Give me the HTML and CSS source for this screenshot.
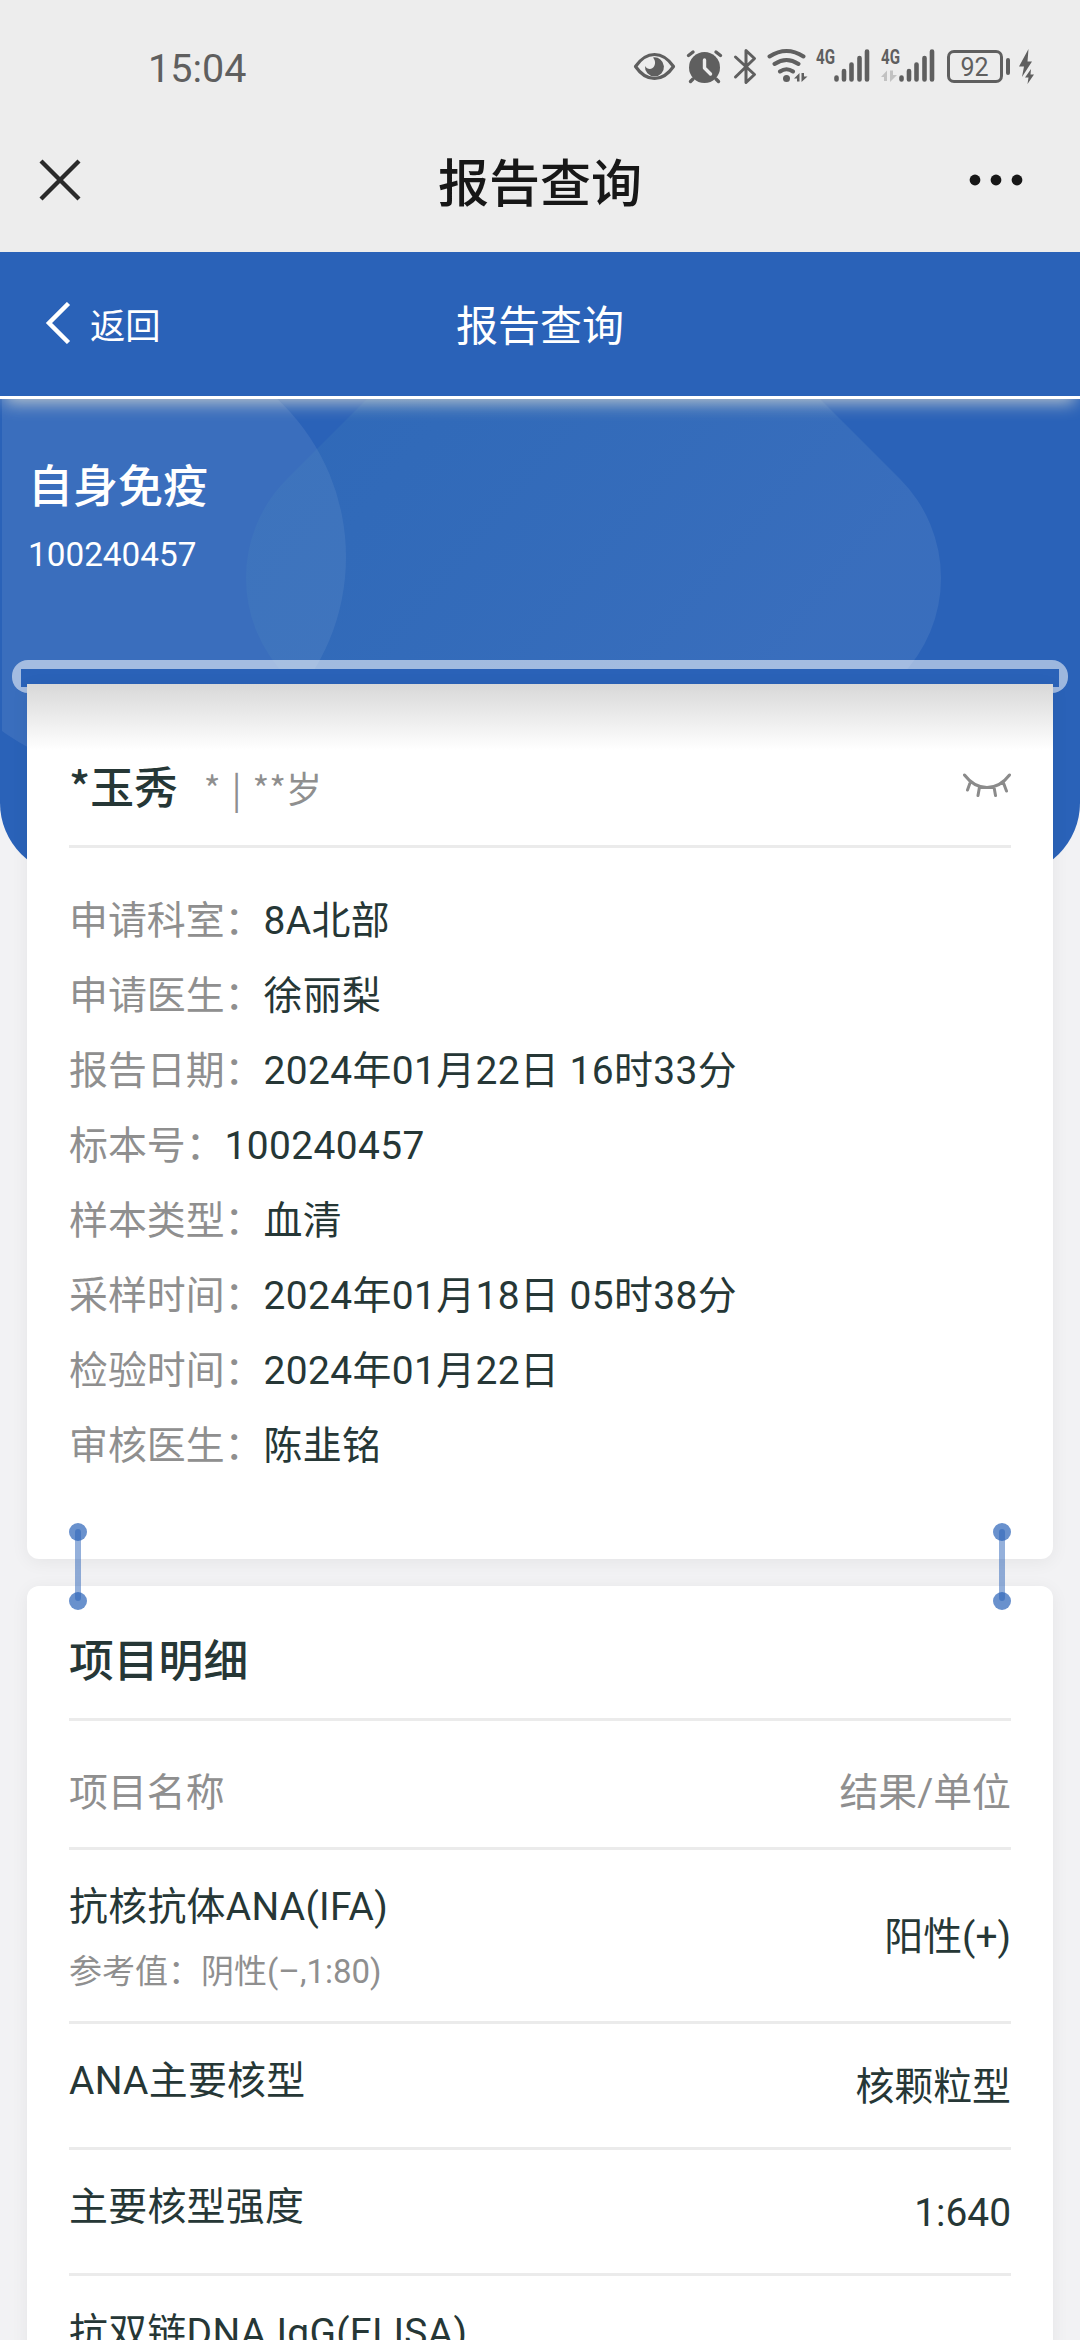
FILE: index.html
```html
<!DOCTYPE html>
<html lang="zh-CN">
<head>
    <meta charset="UTF-8">
    <meta name="viewport" content="width=device-width, initial-scale=1.0">
    <title>报告查询</title>
    <link rel="stylesheet" href="styles.css">
</head>
<body>
    <!-- Phone status bar -->
    <div class="status-bar">
        <span class="clock">15:04</span>
        <div class="status-icons">
            <svg width="48" height="44" viewBox="630 45 48 44">
                <path d="M634.500 66.500C640 58.500 646.500 54.500 653.500 54.500S667 58.500 672.500 66.500C667 74.500 660.500 78.500 653.500 78.500S640 74.500 634.500 66.500Z" fill="none" stroke="#5f5f5f" stroke-width="3.200" stroke-linejoin="round"/>
                <path d="M652 57.500A9.500 9.500 0 1 1 644 66C646 69.500 651 70 653 66.500C655 63 654 60 652 57.500Z" fill="#5f5f5f"/>
            </svg>
            <svg width="50" height="44" viewBox="678 45 50 44">
                <circle cx="703.500" cy="67.500" r="15.500" fill="#5f5f5f"/>
                <path d="M687.500 55.500L692 52M719.500 55.500L715 52M692 79L689.500 81.500M715 79L717.500 81.500" stroke="#5f5f5f" stroke-width="3.400" stroke-linecap="round"/>
                <path d="M703.500 60V68L709.500 74" fill="none" stroke="#ededed" stroke-width="3.400" stroke-linecap="round" stroke-linejoin="round"/>
            </svg>
            <svg width="32" height="44" viewBox="728 45 32 44">
                <path d="M734.500 57L753.500 74.500L745 82.500V50.500L753.500 58.500L734.500 77" fill="none" stroke="#5f5f5f" stroke-width="3" stroke-linecap="round" stroke-linejoin="round"/>
            </svg>
            <svg width="50" height="44" viewBox="760 45 50 44">
                <path d="M768.500 56.500Q785.500 45.500 802.500 56.500M773.500 64Q785.500 56 797.500 64M779 71.500Q785.500 67 792 71.500" fill="none" stroke="#5f5f5f" stroke-width="4" stroke-linecap="round"/>
                <circle cx="785.500" cy="78.500" r="3.500" fill="#5f5f5f"/>
                <path d="M798.500 73V81.500H796V78.500H793ZM800.500 73H803V76.500H806.500L800.500 82Z" fill="#5f5f5f"/>
            </svg>
            <svg width="65" height="44" viewBox="810 45 65 44">
                <text x="815" y="63.500" class="net" textLength="19" lengthAdjust="spacingAndGlyphs">4G</text>
                <path d="M835.500 77.500V79.500M843 71V79.500M850.500 64.500V79.500M858.500 58V79.500M866 51.500V79.500" stroke="#5f5f5f" stroke-width="4.600" stroke-linecap="round"/>
            </svg>
            <svg width="65" height="44" viewBox="810 45 65 44">
                <text x="815" y="63.500" class="net" textLength="19" lengthAdjust="spacingAndGlyphs">4G</text>
                <path d="M821 70.500V81H818V77H815ZM824 70.500H827V75H831L824 82Z" fill="#c2c2c2"/>
                <path d="M835.500 77.500V79.500M843 71V79.500M850.500 64.500V79.500M858.500 58V79.500M866 51.500V79.500" stroke="#5f5f5f" stroke-width="4.600" stroke-linecap="round"/>
            </svg>
            <svg width="96" height="44" viewBox="940 45 96 44">
                <rect x="947.500" y="51.500" width="53" height="30" rx="5.500" fill="none" stroke="#5f5f5f" stroke-width="3"/>
                <text x="973.500" y="75.500" class="battery" text-anchor="middle">92</text>
                <rect x="1005" y="58" width="4" height="17" rx="2" fill="#5f5f5f"/>
                <path d="M1027.500 49L1018 66.500H1023L1021 77L1031 61.500H1026.500ZM1030 69L1024 77.500H1027.500L1026.500 84L1033 74.500H1029.500Z" fill="#5f5f5f"/>
            </svg>
        </div>
    </div>

    <!-- Web view title bar -->
    <div class="nav-bar">
        <svg class="close" width="44" height="44" viewBox="0 0 44 44">
            <path d="M3 3L41 41M41 3L3 41" stroke="#2b2b2b" stroke-width="4.300"/>
        </svg>
        <h1>报告查询</h1>
        <svg class="more" width="54" height="12" viewBox="0 0 54 12">
            <circle cx="6" cy="6" r="5.400"/><circle cx="27" cy="6" r="5.400"/><circle cx="48" cy="6" r="5.400"/>
        </svg>
    </div>

    <header class="page-header">
        <a class="back">
            <svg width="26" height="42" viewBox="0 0 26 42">
                <path d="M23.500 1.500L4 21L23.500 40.500" fill="none" stroke="#fff" stroke-width="4.500"/>
            </svg>
            返回
        </a>
        <h2>报告查询</h2>
    </header>

    <main>
        <section class="banner">
            <svg class="banner-bg" width="1080" height="476" viewBox="0 399 1080 476">
                <defs>
                    <linearGradient id="shade" x1="0" y1="0" x2="1" y2="0.350">
                        <stop offset="0" stop-color="#4a90b8" stop-opacity="0.140"/>
                        <stop offset="1" stop-color="#6a94cc" stop-opacity="0.240"/>
                    </linearGradient>
                    <clipPath id="edge"><rect x="2" y="399" width="1078" height="476"/></clipPath>
                </defs>
                <circle cx="130" cy="557" r="216" fill="#fff" fill-opacity="0.080" clip-path="url(#edge)"/>
                <path d="M246 578A140 140 0 0 1 287 479L387 379H800L900 479A140 140 0 0 1 900 677H287A140 140 0 0 1 246 578Z" fill="url(#shade)"/>
            </svg>
            <div class="banner-text">
                <h3>自身免疫</h3>
                <p>100240457</p>
            </div>
        </section>

        <div class="slot"><div class="slot-inner"></div></div>

        <section class="card patient-card">
            <div class="patient">
                <strong>*玉秀</strong>
                <span>* | **岁</span>
                <svg width="50" height="28" viewBox="961 771 50 28">
                    <path d="M964.500 775Q974 787.500 987 787.500T1009.500 775M970 783L967.500 790M979.500 787L978 795.500M994 787L995.500 795.500M1003.500 783L1006.500 791" fill="none" stroke="#8b8b8b" stroke-width="3" stroke-linecap="round"/>
                </svg>
            </div>
            <dl class="info">
                <div><dt>申请科室：</dt><dd>8A北部</dd></div>
                <div><dt>申请医生：</dt><dd>徐丽梨</dd></div>
                <div><dt>报告日期：</dt><dd>2024年01月22日 16时33分</dd></div>
                <div><dt>标本号：</dt><dd>100240457</dd></div>
                <div><dt>样本类型：</dt><dd>血清</dd></div>
                <div><dt>采样时间：</dt><dd>2024年01月18日 05时38分</dd></div>
                <div><dt>检验时间：</dt><dd>2024年01月22日</dd></div>
                <div><dt>审核医生：</dt><dd>陈韭铭</dd></div>
            </dl>
        </section>

        <section class="card detail-card">
            <i class="link link-left"></i>
            <i class="link link-right"></i>
            <h3>项目明细</h3>
            <div class="row row-head">
                <span>项目名称</span>
                <span>结果/单位</span>
            </div>
            <div class="row row-tall">
                <div class="item">
                    <p>抗核抗体ANA(IFA)</p>
                    <small>参考值：阴性(–,1:80)</small>
                </div>
                <span class="result">阳性(+)</span>
            </div>
            <div class="row">
                <div class="item"><p>ANA主要核型</p></div>
                <span class="result">核颗粒型</span>
            </div>
            <div class="row">
                <div class="item"><p>主要核型强度</p></div>
                <span class="result">1:640</span>
            </div>
            <div class="row">
                <div class="item"><p>抗双链DNA IgG(ELISA)</p></div>
            </div>
        </section>
    </main>
</body>
</html>
```
FILE: styles.css
```css
* {
    box-sizing: border-box;
    margin: 0;
    padding: 0;
}

body {
    height: 2340px;
    overflow: hidden;
    background-color: #f2f2f4;
    font-family: Roboto, "Noto Sans CJK SC", sans-serif;
    font-size: 38.9px;
    color: #263736;
}

h1, h2, h3 {
    font-weight: 500;
}

svg {
    display: block;
    flex: none;
}

/* Status bar */
.status-bar {
    display: flex;
    justify-content: space-between;
    align-items: center;
    height: 108px;
    padding: 26px 43px 0 148px;
    background-color: #ededed;
}

.clock {
    padding-top: 3px;
    font-size: 39.500px;
    color: #5f5f5f;
}

.status-icons {
    display: flex;
}

.net {
    font-size: 20px;
    font-weight: 700;
    fill: #5f5f5f;
}

.battery {
    font-size: 25px;
    fill: #5f5f5f;
}

/* Web view title bar */
.nav-bar {
    display: flex;
    justify-content: space-between;
    align-items: center;
    height: 144px;
    padding: 0 57px 0 38px;
    background-color: #ededed;
    color: #171717;
}

.nav-bar h1 {
    font-size: 51px;
    line-height: 60px;
    margin-left: 29px;
    padding-top: 9px;
}

.more {
    fill: #171717;
}

/* Blue page header */
.page-header {
    position: relative;
    z-index: 1;
    display: grid;
    grid-template-columns: 1fr auto 1fr;
    align-items: center;
    height: 147px;
    padding: 0 45px;
    background-color: #2a62b8;
    border-bottom: 3px solid #fff;
    color: #fff;
    box-shadow: 0 9px 16px -5px rgba(255, 245, 215, 0.65);
}

.back {
    display: flex;
    align-items: center;
    gap: 19px;
    padding-bottom: 2px;
    font-size: 35.300px;
}

.page-header h2 {
    padding-top: 5px;
    font-size: 42px;
    font-weight: 400;
    line-height: 60px;
}

/* Banner */
.banner {
    position: relative;
    height: 476px;
    background-color: #2a62b8;
    border-radius: 0 0 72px 72px;
    overflow: hidden;
    color: #fff;
}

.banner-bg {
    position: absolute;
    top: 0;
    left: 0;
}

.banner-text {
    position: relative;
    padding: 56px 28px;
}

.banner-text h3 {
    font-size: 45px;
    line-height: 66px;
}

.banner-text p {
    margin-top: 8px;
    font-size: 33.300px;
    line-height: 52px;
}

/* Slot the report slides out of */
.slot {
    position: relative;
    height: 33px;
    margin: -215px 12px 0;
    padding: 9px 9px 6px;
    border-radius: 16px;
    background-color: rgba(255, 255, 255, 0.54);
}

.slot-inner {
    height: 100%;
    background-color: #2a62b8;
}

.card {
    position: relative;
    margin: 0 27px;
    padding: 0 42px;
    background-color: #fff;
    box-shadow: 0 3px 18px rgba(0, 0, 0, 0.06);
}

.patient-card {
    height: 875px;
    margin-top: -9px;
    border-radius: 0 0 12px 12px;
    background-image: linear-gradient(#d8d8d8, #fff 66px);
}

.patient {
    display: flex;
    align-items: center;
    height: 164px;
    padding-top: 40px;
    border-bottom: 3px solid #ebebeb;
    font-family: "Noto Sans CJK SC", sans-serif;
}

.patient strong {
    font-size: 43.800px;
    font-weight: 500;
}

.patient span {
    margin-left: 26px;
    padding-top: 4px;
    font-size: 36px;
    word-spacing: 3px;
    color: #8f8f8f;
}

.patient svg {
    margin-left: auto;
}

.info {
    padding-top: 35px;
}

.info div {
    display: flex;
    height: 75px;
    line-height: 75px;
}

.info dt {
    color: #8f8f8f;
}

.info dd {
    letter-spacing: 0.400px;
}

/* Item list */
.detail-card {
    height: 900px;
    margin-top: 27px;
    border-radius: 12px 12px 0 0;
}

.detail-card h3 {
    height: 135px;
    padding-top: 43px;
    border-bottom: 3px solid #ebebeb;
    font-size: 44.800px;
    line-height: 66px;
}

/* Connector between the two cards */
.link {
    position: absolute;
    top: -57px;
    width: 6px;
    height: 72px;
    border-radius: 3px;
    background-color: rgba(42, 98, 184, 0.5);
}

.link-left {
    left: 48px;
}

.link-right {
    right: 48px;
}

.link::before,
.link::after {
    content: "";
    position: absolute;
    left: -6px;
    width: 18px;
    height: 18px;
    border-radius: 50%;
    background-color: rgba(42, 98, 184, 0.7);
}

.link::before {
    top: -6px;
}

.link::after {
    bottom: -9px;
}

.row {
    display: flex;
    justify-content: space-between;
    align-items: center;
    height: 126px;
    border-bottom: 3px solid #ebebeb;
}

.row-head {
    height: 129px;
    padding-top: 18px;
    line-height: 56px;
    color: #8f8f8f;
}

.row-tall {
    height: 174px;
}

.item {
    align-self: flex-start;
    padding-top: 29px;
}

.item p {
    line-height: 56px;
    letter-spacing: 0.300px;
}

.item small {
    display: block;
    margin-top: 11px;
    font-size: 33px;
    line-height: 52px;
    color: #8f8f8f;
}

.result {
    padding-top: 3px;
    line-height: 56px;
}
```
